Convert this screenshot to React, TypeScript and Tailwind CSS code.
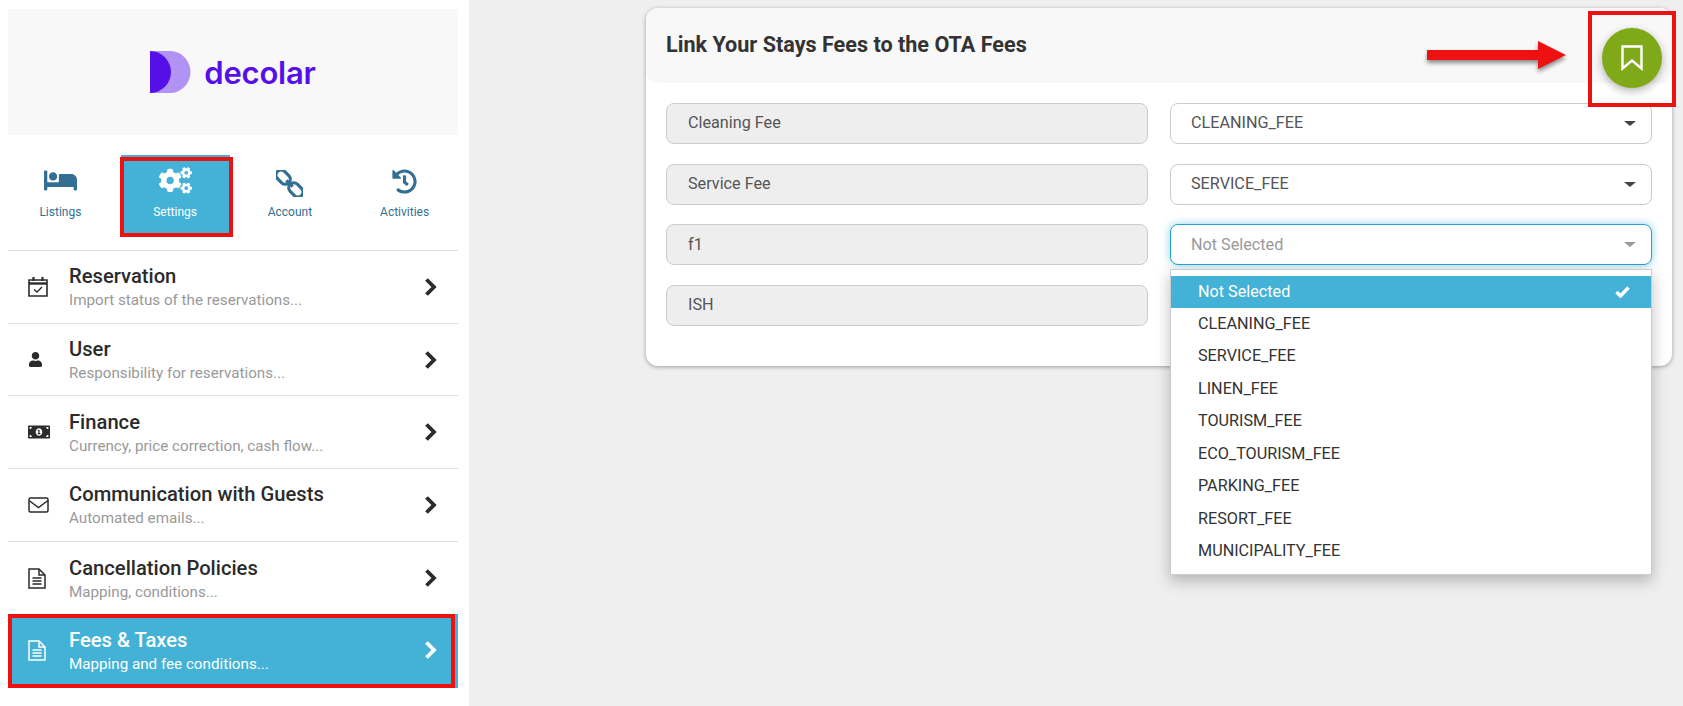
import { ReactNode } from "react";
import { FaBed, FaCogs, FaHistory, FaMoneyBillAlt, FaUser } from "react-icons/fa";

const CalendarIcon = () => (
  <svg width="20" height="21" viewBox="0 0 20 21" fill="none" stroke="currentColor" strokeWidth="1.6">
    <path d="M1 4h18v16H1z" />
    <path d="M1 7.5h18" strokeWidth="2.4" />
    <path d="M5.5 1v4M14.5 1v4" strokeWidth="2.2" />
    <path d="M6 13.5l3 2.6 5-5" strokeWidth="1.4" />
  </svg>
);

const MailIcon = () => (
  <svg width="21" height="16" viewBox="0 0 21 16" fill="none" stroke="currentColor" strokeWidth="1.5">
    <rect x="1" y="1" width="19" height="14" rx="1.5" />
    <path d="M1 3.5l9.5 7 9.5-7" />
  </svg>
);

const FileIcon = () => (
  <svg width="18" height="21" viewBox="0 0 18 21" fill="none" stroke="currentColor" strokeWidth="1.5">
    <path d="M1 1h10l6 6v13H1z" />
    <path d="M11 1v6h6" />
    <path d="M4.5 10h9M4.5 13h9M4.5 16h9" />
  </svg>
);

const Chevron = () => (
  <svg width="13" height="18" viewBox="0 0 13 18" fill="none" stroke="currentColor" strokeWidth="3.8">
    <path d="M2.5 1.5L10 9l-7.5 7.5" />
  </svg>
);

const ChainIcon = () => (
  <svg width="27" height="27" viewBox="0 0 27 27" fill="none" stroke="currentColor" strokeWidth="3.2">
    <g transform="rotate(45 13.5 13.5)">
      <rect x="-3.5" y="8.5" width="16" height="10" rx="5" />
      <rect x="14.5" y="8.5" width="16" height="10" rx="5" />
      <path d="M9 13.5h9" />
    </g>
  </svg>
);

const CheckIcon = () => (
  <svg width="15" height="12" viewBox="0 0 15 12" fill="none" stroke="currentColor" strokeWidth="3.4">
    <path d="M1.5 6l4 4 8-8.5" />
  </svg>
);

const tabs = [
  { label: "Listings", icon: <FaBed size={33} /> },
  { label: "Settings", icon: <FaCogs size={33} />, active: true },
  { label: "Account", icon: <ChainIcon /> },
  { label: "Activities", icon: <FaHistory size={25} className="mb-[3px]" /> },
];

const menu: { title: string; sub: string; icon: ReactNode; active?: boolean }[] = [
  { title: "Reservation", sub: "Import status of the reservations...", icon: <CalendarIcon /> },
  { title: "User", sub: "Responsibility for reservations...", icon: <FaUser size={15} /> },
  { title: "Finance", sub: "Currency, price correction, cash flow...", icon: <FaMoneyBillAlt size={22} /> },
  { title: "Communication with Guests", sub: "Automated emails...", icon: <MailIcon /> },
  { title: "Cancellation Policies", sub: "Mapping, conditions...", icon: <FileIcon /> },
  { title: "Fees & Taxes", sub: "Mapping and fee conditions...", icon: <FileIcon />, active: true },
];

const fields = [
  { name: "Cleaning Fee", value: "CLEANING_FEE" },
  { name: "Service Fee", value: "SERVICE_FEE" },
  { name: "f1", value: "Not Selected", open: true },
  { name: "ISH", value: "" },
];

const options = [
  "CLEANING_FEE",
  "SERVICE_FEE",
  "LINEN_FEE",
  "TOURISM_FEE",
  "ECO_TOURISM_FEE",
  "PARKING_FEE",
  "RESORT_FEE",
  "MUNICIPALITY_FEE",
];

const Logo = () => (
  <div className="flex items-center gap-[13px]">
    <svg width="41" height="42" viewBox="0 0 41 42">
      <path d="M0 0h20a20.5 21 0 0 1 0 42H0z" fill="#b093f3" />
      <path d="M0 0a21 21 0 0 1 0 42z" fill="#5510ea" />
    </svg>
    <span className="font-['Inter',sans-serif] text-[31px] font-semibold leading-none tracking-[-0.2px] text-[#5510ea]">
      decolar
    </span>
  </div>
);

const Sidebar = () => (
  <aside className="w-[469px] shrink-0 bg-white pl-2 pr-[11px] pt-[9px]">
    <div className="flex h-[126px] items-center justify-center bg-[#f8f8f8]">
      <Logo />
    </div>
    <div className="relative -ml-[5px] -mr-[4px] h-[116px] pt-5">
      <div className="grid grid-cols-4">
        {tabs.map((t) => (
          <div
            key={t.label}
            className={`mx-[3px] flex h-[78px] flex-col items-center ${
              t.active ? "bg-[#43b2d6] text-white" : "text-[#336f93]"
            }`}
          >
            <div className="flex h-[42px] items-end justify-center">{t.icon}</div>
            <span className="mt-[7px] text-[12px] leading-4">{t.label}</span>
          </div>
        ))}
      </div>
      <div className="absolute left-[117px] top-[22px] h-[80px] w-[113px] border-4 border-[#ed1111]" />
      <div className="absolute bottom-0 left-[5px] right-[4px] h-px bg-[#dedede]" />
    </div>
    {menu.map((m) => (
      <div
        key={m.title}
        className={`relative flex items-center ${
          m.active
            ? "h-[74px] bg-[#43b2d6] pb-[2px] text-white"
            : "h-[72.7px] text-[#2b2b2b] [&:nth-child(n+3):not(:nth-last-child(2))]:border-b border-[#dedede]"
        }`}
      >
        <div className="flex w-[61px] justify-start pl-[20px]">{m.icon}</div>
        <div className="flex-1">
          <div className="text-[20.2px] font-medium leading-[26px]">{m.title}</div>
          <div className={`mt-px text-[15.2px] leading-[20px] ${m.active ? "text-white" : "text-[#999999]"}`}>{m.sub}</div>
        </div>
        <div className="mr-[21px] flex">
          <Chevron />
        </div>
        {m.active && <div className="absolute inset-0 right-[3px] border-4 border-[#ed1111]" />}
      </div>
    ))}
  </aside>
);

const Field = ({ name, value, open }: { name: string; value: string; open?: boolean }) => (
  <div className="grid grid-cols-[482px_482px] gap-x-[22px]">
    <div className="flex h-[41px] items-center rounded-lg border border-[#cccccc] bg-[#eeeeee] pl-[21px] text-[16.2px] text-[#555555]">
      {name}
    </div>
    <div className="relative">
      <div
        className={`flex h-[41px] items-center justify-between rounded-lg border bg-white pl-[20px] pr-[15px] text-[16.2px] ${
          open
            ? "border-[#2a9fd6] text-[#999999] shadow-[0_0_8px_rgba(67,178,214,0.6)]"
            : "border-[#cccccc] text-[#555555]"
        }`}
      >
        {value}
        <span
          className={`h-0 w-0 border-x-[6px] border-t-[5px] border-x-transparent ${
            open ? "border-t-[#999999]" : "border-t-[#444444]"
          }`}
        />
      </div>
      {open && (
        <div className="absolute left-0 right-0 top-[45px] z-10 border border-[#cccccc] bg-white pb-[6.5px] pt-[6px] text-[16.2px] text-[#333333] shadow-[0_6px_14px_rgba(0,0,0,0.25)]">
          <div className="flex h-[31.5px] items-center justify-between bg-[#43b2d6] pl-[27px] pr-[21px] text-white">
            Not Selected
            <CheckIcon />
          </div>
          {options.map((o) => (
            <div key={o} className="flex h-[32.5px] items-center pl-[27px]">
              {o}
            </div>
          ))}
        </div>
      )}
    </div>
  </div>
);

const Card = () => (
  <section className="relative h-[358px] w-[1026px] rounded-xl bg-white shadow-[0_1px_4px_rgba(0,0,0,0.35)]">
    <div className="flex h-[75px] items-center rounded-xl bg-[#f8f8f8] pl-5">
      <h1 className="text-[21.6px] font-bold text-[#333333]">Link Your Stays Fees to the OTA Fees</h1>
    </div>
    <div className="flex flex-col gap-[19.67px] pl-5 pr-[19px] pt-5">
      {fields.map((f) => (
        <Field key={f.name} {...f} />
      ))}
    </div>
    {/* save button + annotation */}
    <div className="absolute left-[956px] top-[20px] flex h-[60px] w-[60px] items-center justify-center rounded-full bg-[#7fa918] shadow-[0_3px_8px_rgba(0,0,0,0.3)]">
      <svg width="22" height="26" viewBox="0 0 22 26" fill="none" stroke="white" strokeWidth="2.4">
        <path d="M1.5 1.5h19v22l-9.5-8-9.5 8z" />
      </svg>
    </div>
    <div className="absolute left-[942px] top-[3px] h-[96px] w-[88px] border-4 border-[#ed1111]" />
    <svg
      className="absolute left-[781px] top-[33px] drop-shadow-[0_3px_2px_rgba(0,0,0,0.45)]"
      width="139"
      height="28"
      viewBox="0 0 139 28"
    >
      <path d="M0 9h111V0l28 14-28 14V19H0z" fill="#ed1111" />
    </svg>
  </section>
);

export default function App() {
  return (
    <div className="flex h-[706px] bg-[#efefef] font-['Roboto',sans-serif]">
      <Sidebar />
      <main className="pl-[177px] pt-2">
        <Card />
      </main>
    </div>
  );
}
